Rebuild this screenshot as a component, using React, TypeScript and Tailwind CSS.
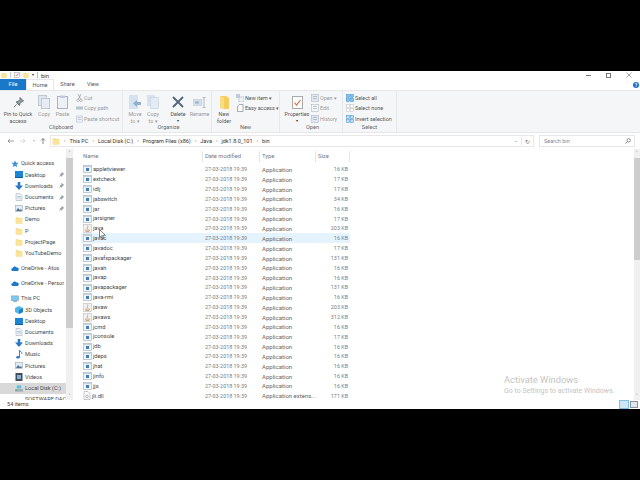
import React from "react";

const Folder = ({ s = 8 }: { s?: number }) => (
  <svg width={s} height={s} viewBox="0 0 10 10" className="shrink-0">
    <path d="M1 1.5h3l1 1h4v7H1z" fill="#f6d878" />
    <path d="M1 3h8v6.5H1z" fill="#fbe49a" />
  </svg>
);

const AppIcon = () => (
  <svg width="9" height="8" viewBox="0 0 9 8" className="shrink-0">
    <rect x="0.5" y="0.5" width="8" height="7" fill="#f3f6fa" stroke="#a9b5c1" strokeWidth="0.7" />
    <rect x="1" y="1" width="7" height="1.2" fill="#c5d3e0" />
    <rect x="3" y="3" width="3" height="3" fill="#3f7dbd" />
  </svg>
);

const JavaIcon = () => (
  <svg width="9" height="9" viewBox="0 0 9 9" className="shrink-0">
    <rect x="0.5" y="0.5" width="8" height="8" fill="#f1f1f1" stroke="#bdbdbd" strokeWidth="0.6" />
    <path d="M4.5 1.5c1 1.5-1 2 0 3.500M2.500 6h4l-.5 1.500h-3z" stroke="#c58a55" strokeWidth="0.7" fill="none" />
  </svg>
);

const DllIcon = () => (
  <svg width="8" height="9" viewBox="0 0 8 9" className="shrink-0">
    <path d="M1 .5h4l2 2v6H1z" fill="#fbfbfb" stroke="#a5a5a5" strokeWidth="0.6" />
    <circle cx="4" cy="5.500" r="1.300" fill="none" stroke="#8b8b8b" strokeWidth="0.6" />
  </svg>
);

const files: [string, string, string, "a" | "j" | "d"][] = [
  ["appletviewer", "Application", "16 KB", "a"],
  ["extcheck", "Application", "17 KB", "a"],
  ["idlj", "Application", "17 KB", "a"],
  ["jabswitch", "Application", "34 KB", "a"],
  ["jar", "Application", "16 KB", "a"],
  ["jarsigner", "Application", "17 KB", "a"],
  ["java", "Application", "203 KB", "j"],
  ["javac", "Application", "16 KB", "a"],
  ["javadoc", "Application", "17 KB", "a"],
  ["javafxpackager", "Application", "131 KB", "a"],
  ["javah", "Application", "16 KB", "a"],
  ["javap", "Application", "16 KB", "a"],
  ["javapackager", "Application", "131 KB", "a"],
  ["java-rmi", "Application", "16 KB", "a"],
  ["javaw", "Application", "203 KB", "j"],
  ["javaws", "Application", "312 KB", "j"],
  ["jcmd", "Application", "16 KB", "a"],
  ["jconsole", "Application", "17 KB", "a"],
  ["jdb", "Application", "16 KB", "a"],
  ["jdeps", "Application", "16 KB", "a"],
  ["jhat", "Application", "16 KB", "a"],
  ["jinfo", "Application", "16 KB", "a"],
  ["jjs", "Application", "16 KB", "a"],
  ["jli.dll", "Application extens...", "171 KB", "d"],
];

type Nav = { t: string; c: string; pin?: boolean; active?: boolean };

const NavIcon = ({ c }: { c: string }) => {
  if (c === "folder") return <Folder s={8} />;
  if (c === "star")
    return (
      <svg width="8" height="8" viewBox="0 0 10 10" className="shrink-0">
        <path d="M5 .5l1.400 3h3.100l-2.500 2.200.8 3.300L5 7.300 2.200 9l.8-3.300L.5 3.500h3.100z" fill="#3d93d8" />
      </svg>
    );
  if (c === "cloud")
    return (
      <svg width="8" height="7" viewBox="0 0 10 7" className="shrink-0">
        <path d="M2 6.500a1.700 1.700 0 010-3.400 2.700 2.700 0 015-.8A2.100 2.100 0 018 6.500z" fill="#1c78c8" />
      </svg>
    );
  if (c === "pc")
    return (
      <svg width="8" height="8" viewBox="0 0 9 8" className="shrink-0">
        <rect x="0.500" y="0.500" width="8" height="5.500" fill="#7cc8ee" stroke="#6a8fa8" strokeWidth="0.5" />
        <rect x="2.500" y="6.500" width="4" height="1" fill="#8a9aa6" />
      </svg>
    );
  if (c === "desk")
    return (
      <svg width="8" height="7" viewBox="0 0 8 7" className="shrink-0">
        <rect width="8" height="6" fill="#1b86d3" />
        <rect y="6" width="8" height="1" fill="#0e5f9e" />
      </svg>
    );
  if (c === "down")
    return (
      <svg width="8" height="8" viewBox="0 0 8 8" className="shrink-0">
        <path d="M2.700 0h2.600v3.500H8L4 8 0 3.500h2.700z" fill="#2a77c8" />
      </svg>
    );
  if (c === "doc")
    return (
      <svg width="8" height="8" viewBox="0 0 7 8" className="shrink-0">
        <path d="M.5.500h4l2 2v5h-6z" fill="#eef3f8" stroke="#a8b2bc" strokeWidth="0.6" />
        <path d="M1.500 3.500h4M1.500 5h4" stroke="#7fa6cc" strokeWidth="0.5" />
      </svg>
    );
  if (c === "pic")
    return (
      <svg width="8" height="7" viewBox="0 0 8 7" className="shrink-0">
        <rect x=".3" y=".3" width="7.400" height="6.400" fill="#e2eef7" stroke="#8c9aa6" strokeWidth="0.5" />
        <path d="M1 6l2-3 2 2 1-1 1 2z" fill="#53718c" />
      </svg>
    );
  if (c === "3d")
    return (
      <svg width="8" height="8" viewBox="0 0 8 8" className="shrink-0">
        <path d="M4 0l4 2v4L4 8 0 6V2z" fill="#4cb7e8" />
        <path d="M4 4l4-2v4L4 8z" fill="#1f82bd" />
      </svg>
    );
  if (c === "music")
    return (
      <svg width="8" height="9" viewBox="0 0 7 9" className="shrink-0">
        <path d="M3 0h1c.3 1.500 2.500 2 2.500 4M4 1v6" stroke="#2a77c8" strokeWidth="0.9" fill="none" />
        <ellipse cx="2.500" cy="7.300" rx="1.800" ry="1.300" fill="#2a77c8" />
      </svg>
    );
  if (c === "video")
    return (
      <svg width="8" height="8" viewBox="0 0 7 8" className="shrink-0">
        <rect width="7" height="8" fill="#454c56" />
        <rect x="1.500" y="2" width="4" height="4" fill="#7fb4da" />
      </svg>
    );
  if (c === "disk")
    return (
      <svg width="8" height="7" viewBox="0 0 9 7" className="shrink-0">
        <rect x="2" width="5" height="3.500" fill="#5fc0e0" />
        <rect y="4" width="9" height="3" fill="#a3adb5" />
        <rect x="1" y="5" width="1.500" height="1" fill="#33c15a" />
      </svg>
    );
  return <span className="w-2 shrink-0" />;
};

const Pin = () => (
  <svg width="5" height="5" viewBox="0 0 6 6" className="shrink-0">
    <path d="M3.500.5l2 2-1 .5-1 1.200-.3 1-1.900-1.900 1-.3 1.200-1zM1.700 4.300L.5 5.500" stroke="#76818a" strokeWidth="0.7" fill="#9aa3ab" />
  </svg>
);

const navTop: Nav[] = [
  { t: "Desktop", c: "desk", pin: true },
  { t: "Downloads", c: "down", pin: true },
  { t: "Documents", c: "doc", pin: true },
  { t: "Pictures", c: "pic", pin: true },
  { t: "Demo", c: "folder" },
  { t: "P", c: "folder" },
  { t: "ProjectPage", c: "folder" },
  { t: "YouTubeDemo", c: "folder" },
];
const navPc: Nav[] = [
  { t: "3D Objects", c: "3d" },
  { t: "Desktop", c: "desk" },
  { t: "Documents", c: "doc" },
  { t: "Downloads", c: "down" },
  { t: "Music", c: "music" },
  { t: "Pictures", c: "pic" },
  { t: "Videos", c: "video" },
  { t: "Local Disk (C:)", c: "disk", active: true },
];

const NavRow = ({ n, indent }: { n: Nav; indent: boolean }) => (
  <div className={`h-[11.2px] flex items-center gap-[2px] shrink-0 ${indent ? "pl-[15px]" : "pl-[11px]"} pr-[2px] ${n.active ? "bg-[#d9d9d9]" : ""}`}>
    <NavIcon c={n.c} />
    <span className="flex-1 whitespace-nowrap text-[#4a4a4a]">{n.t}</span>
    {n.pin && <Pin />}
  </div>
);

const Group = ({ w, label, children }: { w: string; label: string; children: React.ReactNode }) => (
  <div className={`${w} h-full flex flex-col border-r border-[#e6e8ea] shrink-0`}>
    <div className="h-[33.500px] flex items-start pt-[2px] overflow-hidden">{children}</div>
    <div className="h-[9px] flex items-center justify-center text-[#666] text-[5.600px]">{label}</div>
  </div>
);

const Big = ({ w, lines, icon, faded, caret }: { w: string; lines: string[]; icon: React.ReactNode; faded?: boolean; caret?: boolean }) => (
  <div className={`${w} flex flex-col items-center shrink-0`}>
    <div className="h-[18px] flex items-center justify-center">{icon}</div>
    {lines.map((l) => (
      <div key={l} className={`leading-[6.5px] text-[5.400px] whitespace-nowrap ${faded ? "text-[#9a9a9a]" : "text-[#555]"}`}>{l}</div>
    ))}
    {caret && <div className="leading-[5px] text-[4px] text-[#333]">▾</div>}
  </div>
);

const Small = ({ t, icon, faded }: { t: string; icon: React.ReactNode; faded?: boolean }) => (
  <div className={`h-[10.300px] flex items-center gap-[1px] text-[5.400px] whitespace-nowrap ${faded ? "text-[#9a9a9a]" : "text-[#555]"}`}>
    {icon}
    <span>{t}</span>
  </div>
);

const Mini = ({ c }: { c: string }) => (
  <svg width="8" height="8" viewBox="0 0 8 8" className="shrink-0">
    <rect x=".5" y=".5" width="7" height="7" fill={c} stroke="#9fb0c0" strokeWidth="0.5" />
    <path d="M2 2.500h4M2 4.500h4" stroke="#8899aa" strokeWidth="0.5" />
  </svg>
);

const Grid4 = ({ c }: { c: string }) => {
  const s = c === "#fff" ? "#bcbcbc" : "#3a8fd0";
  return (
    <svg width="8" height="8" viewBox="0 0 8 8" className="shrink-0">
      <rect x=".5" y=".5" width="3" height="3" fill={c} stroke={s} strokeWidth="0.5" />
      <rect x="4.500" y=".5" width="3" height="3" fill={c} stroke={s} strokeWidth="0.5" />
      <rect x=".5" y="4.500" width="3" height="3" fill={c} stroke={s} strokeWidth="0.5" />
      <rect x="4.500" y="4.500" width="3" height="3" fill={c} stroke={s} strokeWidth="0.5" />
    </svg>
  );
};

const Crumb = ({ t }: { t: string }) => (
  <>
    <span className="text-[#777] text-[5px]">›</span>
    <span>{t}</span>
  </>
);

export default function App() {
  return (
    <div className="w-[640px] h-[480px] bg-black pt-[71px] overflow-hidden" style={{ fontFamily: 'Roboto, "Noto Sans", sans-serif' }}>
      <div className="w-full h-[338px] bg-white flex flex-col text-[6px] text-[#444] relative">
        {/* title bar */}
        <div className="h-[8px] flex items-center pl-[1px] gap-[3px] shrink-0">
          <Folder s={6} />
          <span className="w-px h-[6px] bg-[#ccc]" />
          <svg width="6" height="6" viewBox="0 0 6 6"><rect x=".5" y=".5" width="5" height="5" fill="#fff" stroke="#999" strokeWidth="0.5" /><path d="M1.500 3l1 1 2-2.500" stroke="#d35" strokeWidth="0.7" fill="none" /></svg>
          <Folder s={6} />
          <span className="text-[4px] text-[#333]">▾</span>
          <span className="w-px h-[6px] bg-[#bbb]" />
          <span className="text-[6px] text-[#333]">bin</span>
          <div className="ml-auto flex items-center gap-[15px] pr-[8px]">
            <span className="w-[5px] h-px bg-[#777]" />
            <span className="w-[5px] h-[5px] border border-[#777]" />
            <svg width="6" height="6" viewBox="0 0 6 6"><path d="M.5.500l5 5M5.500.500l-5 5" stroke="#666" strokeWidth="0.6" /></svg>
          </div>
        </div>
        {/* tabs */}
        <div className="h-[11px] flex items-stretch shrink-0 text-[5.600px]">
          <div className="w-[26px] bg-[#1a78c9] text-white flex items-center justify-center">File</div>
          <div className="w-[28px] flex items-center justify-center border-x border-t border-[#e6e8ea] text-[#555]">Home</div>
          <div className="w-[27px] flex items-center justify-center text-[#555]">Share</div>
          <div className="w-[24px] flex items-center justify-center text-[#555]">View</div>
          <div className="ml-auto flex items-center gap-[5px] pr-[1px]">
            <span className="text-[#aaa] text-[5px]">˄</span>
            <span className="w-[6px] h-[6px] rounded-full bg-[#1a72c4] text-white text-[5px] leading-[6px] text-center font-bold">?</span>
          </div>
        </div>
        {/* ribbon */}
        <div className="h-[43px] bg-[#f5f6f7] border-y border-[#e6e7e9] flex shrink-0">
          <Group w="w-[123px]" label="Clipboard">
            <Big w="w-[36px]" lines={["Pin to Quick", "access"]} icon={<svg width="11" height="11" viewBox="0 0 11 11"><path d="M7 .5l3.500 3.500-1.500.5-2 2-.5 2-3.500-3.500 2-.5 2-2zM3.500 7.500L.8 10.200" stroke="#6d7780" strokeWidth="1" fill="#8f99a3" /></svg>} />
            <Big w="w-[16px]" lines={["Copy"]} faded icon={<svg width="12" height="14" viewBox="0 0 12 14"><rect x=".5" y=".5" width="8" height="10" fill="#dfe6ee" stroke="#c0c8d0" /><rect x="3.500" y="3.500" width="8" height="10" fill="#e7ecf2" stroke="#c0c8d0" /></svg>} />
            <Big w="w-[21px]" lines={["Paste"]} faded icon={<svg width="11" height="14" viewBox="0 0 11 14"><rect x=".5" y="1.500" width="10" height="12" fill="#eef2f6" stroke="#a9b4c0" /><rect x="3" y=".5" width="5" height="2.500" fill="#c3ccd6" /></svg>} />
            <div className="flex flex-col pl-[3px]">
              <Small faded t="Cut" icon={<svg width="7" height="8" viewBox="0 0 7 8"><path d="M2 0l2.500 5M5 0L2.500 5" stroke="#8a8a8a" strokeWidth="0.6" /><circle cx="2" cy="6.300" r="1.200" fill="none" stroke="#999" strokeWidth="0.6" /><circle cx="5" cy="6.300" r="1.200" fill="none" stroke="#999" strokeWidth="0.6" /></svg>} />
              <Small faded t="Copy path" icon={<svg width="7" height="8" viewBox="0 0 7 8"><rect y="2.500" width="7" height="3" fill="#b6c2ce" /></svg>} />
              <Small faded t="Paste shortcut" icon={<svg width="7" height="8" viewBox="0 0 8 8"><rect x=".5" y=".5" width="7" height="7" fill="#eef2f6" stroke="#9fb0c0" strokeWidth="0.5" /><path d="M2 2.500h4M2 4.500h4" stroke="#8899aa" strokeWidth="0.5" /></svg>} />
            </div>
          </Group>
          <Group w="w-[89px] pl-[3px]" label="Organize">
            <Big w="w-[18px]" lines={["Move", "to ▾"]} faded icon={<svg width="13" height="14" viewBox="0 0 13 14"><rect width="9" height="14" fill="#d6e2ef" /><path d="M12 7v3H8v2L4 8.500 8 5v2z" fill="#8fb0cf" /></svg>} />
            <Big w="w-[18px]" lines={["Copy", "to ▾"]} faded icon={<svg width="12" height="14" viewBox="0 0 12 14"><rect width="8" height="11" fill="#d6e2ef" /><rect x="3.500" y="2.500" width="8" height="11" fill="#e3ebf3" stroke="#c3d0dc" strokeWidth="0.6" /></svg>} />
            <div className="w-[6px] shrink-0" />
            <Big w="w-[20px]" lines={["Delete"]} caret icon={<svg width="12" height="12" viewBox="0 0 12 12"><path d="M1 1l10 10M11 1L1 11" stroke="#51667b" strokeWidth="1.800" /></svg>} />
            <Big w="w-[23px]" lines={["Rename"]} faded icon={<svg width="14" height="11" viewBox="0 0 14 11"><rect y="2.500" width="9" height="6" fill="#d4e0ec" stroke="#b9c5d1" strokeWidth="0.5" /><rect x="2" y="4.500" width="4" height="2" fill="#9cb3c9" /><path d="M11 .5v10M9.500.5h3M9.500 10.500h3" stroke="#97a5b3" strokeWidth="0.7" /></svg>} />
          </Group>
          <Group w="w-[68px]" label="New">
            <Big w="w-[24px]" lines={["New", "folder"]} icon={<svg width="9" height="13" viewBox="0 0 9 13"><path d="M0 0h6l3 2v11H3l-3-1z" fill="#f5cc5e" /><path d="M0 0l4 2v11l-4-1z" fill="#f9dd86" /></svg>} />
            <div className="flex flex-col">
              <Small t="New item ▾" icon={<svg width="8" height="8" viewBox="0 0 8 8"><rect x="0" y="0" width="4" height="4" fill="#c4ced8" /><rect x="3" y="3" width="5" height="5" fill="#eef2f6" stroke="#9caab8" strokeWidth="0.5" /></svg>} />
              <Small t="Easy access ▾" icon={<svg width="8" height="8" viewBox="0 0 7 8"><path d="M3 .5h3.500v7H1V2.500z" fill="#fff" stroke="#6d7b89" strokeWidth="0.6" /></svg>} />
            </div>
          </Group>
          <Group w="w-[63px] pl-[3px]" label="Open">
            <Big w="w-[28px]" lines={["Properties"]} caret icon={<svg width="11" height="13" viewBox="0 0 11 13"><rect x=".5" y=".5" width="10" height="12" fill="#fff" stroke="#a9a9a9" /><path d="M2.500 6.500l2 2.500 4-5" stroke="#e2622a" strokeWidth="1.100" fill="none" /></svg>} />
            <div className="flex flex-col">
              <Small faded t="Open ▾" icon={<Mini c="#e3e8ee" />} />
              <Small faded t="Edit" icon={<Mini c="#f6f7f8" />} />
              <Small faded t="History" icon={<Mini c="#dfe8f0" />} />
            </div>
          </Group>
          <Group w="w-[54px]" label="Select">
            <div className="flex flex-col pl-[3px]">
              <Small t="Select all" icon={<Grid4 c="#7fc1ee" />} />
              <Small t="Select none" icon={<Grid4 c="#fff" />} />
              <Small t="Invert selection" icon={<Grid4 c="#c5dcf0" />} />
            </div>
          </Group>
        </div>
        {/* address */}
        <div className="h-[16px] flex items-center shrink-0 pl-[5px] pr-[5px]">
          <svg width="42" height="8" viewBox="0 0 42 8" className="shrink-0">
            <path d="M3 4h6M3 4l2-2M3 4l2 2" stroke="#777" strokeWidth="0.7" fill="none" />
            <path d="M15 4h5M20 4l-2-2M20 4l-2 2" stroke="#c8c8c8" strokeWidth="0.7" fill="none" />
            <path d="M28 3l1.200 1.200L30.400 3" stroke="#888" strokeWidth="0.6" fill="none" />
            <path d="M38 7V1.500M38 1.500l-2 2M38 1.500l2 2" stroke="#555" strokeWidth="0.7" fill="none" />
          </svg>
          <div className="flex-1 h-[12px] ml-[3px] border border-[#e8e8e8] flex items-center gap-[4px] pl-[1px] text-[#333] text-[5.500px]">
            <Folder s={8} />
            <Crumb t="This PC" />
            <Crumb t="Local Disk (C:)" />
            <Crumb t="Program Files (x86)" />
            <Crumb t="Java" />
            <Crumb t="jdk1.8.0_101" />
            <Crumb t="bin" />
            <div className="ml-auto flex items-center gap-[3px] pr-[3px] text-[#777]">
              <span className="text-[5px]">⌄</span>
              <span className="w-px h-[8px] bg-[#e4e4e4]" />
              <span className="text-[6px]">↻</span>
            </div>
          </div>
          <div className="w-[96px] h-[12px] ml-[5px] border border-[#e8e8e8] flex items-center pl-[4px] pr-[3px] text-[#888] text-[5.500px] shrink-0">
            <span className="flex-1">Search bin</span>
            <svg width="6" height="6" viewBox="0 0 6 6"><circle cx="3.700" cy="2.300" r="1.700" fill="none" stroke="#555" strokeWidth="0.6" /><path d="M2.500 3.500L.5 5.500" stroke="#555" strokeWidth="0.7" /></svg>
          </div>
        </div>
        {/* content */}
        <div className="flex flex-1 min-h-0">
          {/* nav */}
          <div className="w-[66px] shrink-0 overflow-hidden flex flex-col pt-[9px] text-[5.600px]">
            <NavRow n={{ t: "Quick access", c: "star" }} indent={false} />
            {navTop.map((n, i) => <NavRow key={i} n={n} indent />)}
            <div className="h-[4px] shrink-0" />
            <NavRow n={{ t: "OneDrive - Atos", c: "cloud" }} indent={false} />
            <div className="h-[4px] shrink-0" />
            <NavRow n={{ t: "OneDrive - Persor", c: "cloud" }} indent={false} />
            <div className="h-[4px] shrink-0" />
            <NavRow n={{ t: "This PC", c: "pc" }} indent={false} />
            {navPc.map((n, i) => <NavRow key={i} n={n} indent />)}
            <NavRow n={{ t: "SOFTWARE DAC", c: "" }} indent />
          </div>
          {/* nav scrollbar */}
          <div className="w-[7px] shrink-0 bg-[#f0f0f0] flex flex-col">
            <div className="h-[9px] text-[5px] leading-[9px] text-center text-[#555] shrink-0">˄</div>
            <div className="h-[170px] bg-[#cdcdcd] shrink-0" />
            <div className="flex-1" />
            <div className="h-[7px] text-[5px] leading-[7px] text-center text-[#555] shrink-0">˅</div>
          </div>
          {/* list */}
          <div className="flex-1 min-w-0 flex flex-col pl-[8px] overflow-hidden relative">
            <div className="h-[15.500px] shrink-0 flex items-center text-[#6d7b8a] text-[5.800px]">
              <div className="w-[122px] pl-[2px] border-r border-[#e5e5e5] h-[11px] flex items-center">Name</div>
              <div className="w-[57px] pl-[2px] border-r border-[#e5e5e5] h-[11px] flex items-center">Date modified</div>
              <div className="w-[56px] pl-[2px] border-r border-[#e5e5e5] h-[11px] flex items-center">Type</div>
              <div className="w-[34px] pl-[2px] border-r border-[#e5e5e5] h-[11px] flex items-center">Size</div>
            </div>
            <div className="flex flex-col">
              {files.map(([n, ty, sz, k]) => (
                <div key={n} className={`w-[269px] h-[9.850px] shrink-0 flex items-center text-[5.700px] ${n === "javac" ? "bg-[#e5f3ff]" : ""}`}>
                  <div className="w-[122px] flex items-center gap-[1.500px] pl-[1.500px] text-[#444] whitespace-nowrap">
                    {k === "a" ? <AppIcon /> : k === "j" ? <JavaIcon /> : <DllIcon />}
                    <span>{n}</span>
                  </div>
                  <div className="w-[57px] pl-[2px] text-[#7a7a7a] text-[5.400px] whitespace-nowrap">27-03-2018 19:39</div>
                  <div className="w-[56px] pl-[2px] text-[#666] text-[6px] whitespace-nowrap overflow-hidden">{ty}</div>
                  <div className="w-[32px] text-right text-[#7a7a7a] text-[5.400px] whitespace-nowrap">{sz}</div>
                </div>
              ))}
            </div>
            <svg width="8" height="11" viewBox="0 0 8 11" className="absolute left-[26px] top-[80px]">
              <path d="M.5.500v8l2-1.800 1.300 3 1.200-.5-1.300-2.900h2.800z" fill="#fff" stroke="#333" strokeWidth="0.6" />
            </svg>
          </div>
          {/* right scrollbar */}
          <div className="w-[6.500px] shrink-0 bg-[#f0f0f0] flex flex-col">
            <div className="h-[9px] text-[5px] leading-[9px] text-center text-[#555] shrink-0">˄</div>
            <div className="h-[102px] bg-[#cdcdcd] shrink-0" />
            <div className="flex-1" />
            <div className="h-[7px] text-[5px] leading-[7px] text-center text-[#555] shrink-0">˅</div>
          </div>
        </div>
        {/* status */}
        <div className="h-[9px] shrink-0 flex items-center pl-[7px] text-[5.600px] text-[#444]">
          <span>54 items</span>
          <div className="ml-auto flex items-center gap-px pr-[2px]">
            <span className="w-[10px] h-[9px] bg-[#cfe6f7] border border-[#7fc0ea]" />
            <span className="w-[8px] h-[7px] bg-[#dfe5ea] border border-[#8595a3]" />
          </div>
        </div>
        {/* watermark */}
        <div className="absolute left-[504px] top-[303px] text-[#c4c4c4] pointer-events-none whitespace-nowrap">
          <div className="text-[9.300px] leading-[12px]">Activate Windows</div>
          <div className="text-[7px] leading-[10px]">Go to Settings to activate Windows.</div>
        </div>
      </div>
    </div>
  );
}
